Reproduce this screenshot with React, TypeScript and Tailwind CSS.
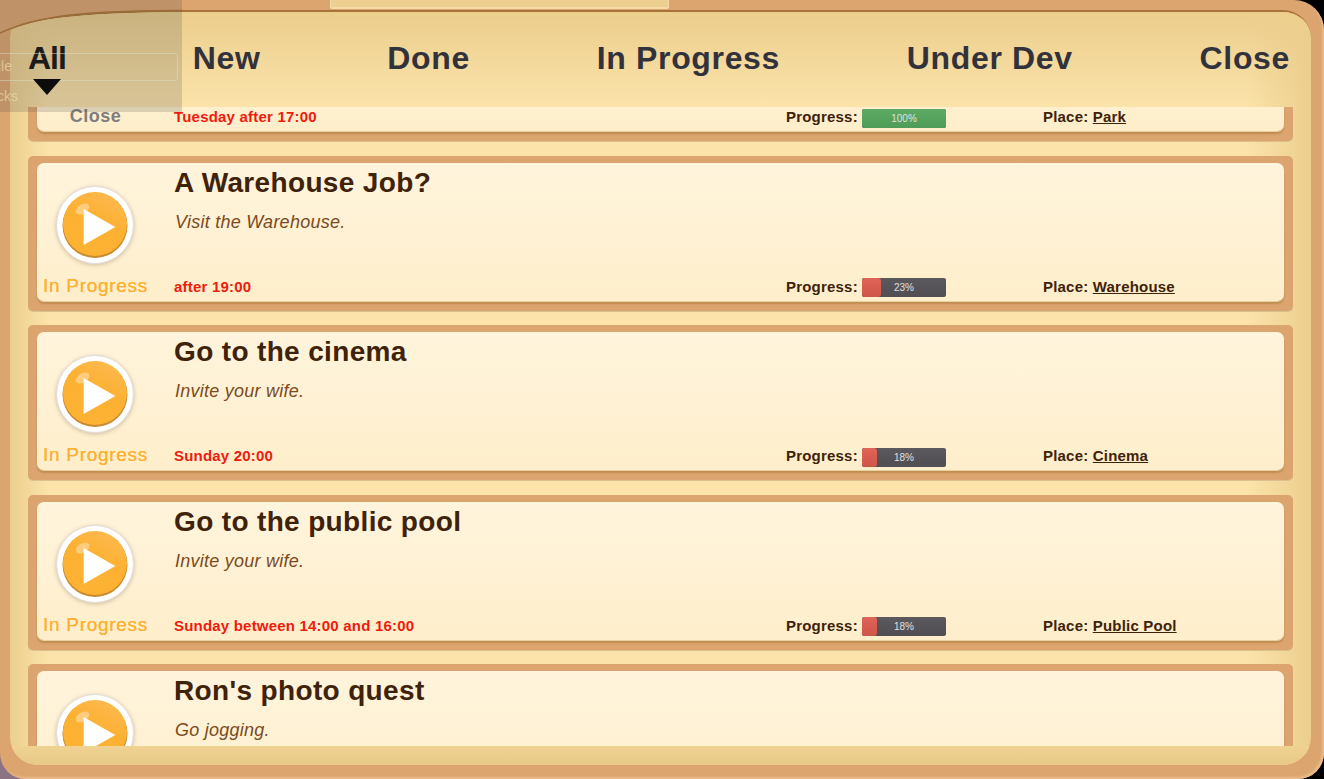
import React from "react";

const font = "font-['Liberation_Sans',Arial,sans-serif]";

interface Quest {
  id: number;
  title?: string;
  desc?: string;
  status?: string;
  time?: string;
  progress?: number;
  place?: string;
}

const quests: Quest[] = [
  { id: 1, status: "Close", time: "Tuesday after 17:00", progress: 100, place: "Park" },
  { id: 2, title: "A Warehouse Job?", desc: "Visit the Warehouse.", status: "In Progress", time: "after 19:00", progress: 23, place: "Warehouse" },
  { id: 3, title: "Go to the cinema", desc: "Invite your wife.", status: "In Progress", time: "Sunday 20:00", progress: 18, place: "Cinema" },
  { id: 4, title: "Go to the public pool", desc: "Invite your wife.", status: "In Progress", time: "Sunday between 14:00 and 16:00", progress: 18, place: "Public Pool" },
  { id: 5, title: "Ron's photo quest", desc: "Go jogging." },
];

const PlayIcon = () => (
  <svg className="mr-[2px] drop-shadow-[0_1px_2px_rgba(120,90,60,0.35)]" width="80" height="80" viewBox="0 0 80 80">
    <defs>
      <linearGradient id="orb" x1="0.8" y1="0" x2="0.3" y2="1">
        <stop offset="0" stopColor="#fdba52" />
        <stop offset="0.45" stopColor="#fdb133" />
        <stop offset="1" stopColor="#feb232" />
      </linearGradient>
    </defs>
    <circle cx="40" cy="40" r="38.5" fill="#fff" stroke="#e2dedd" strokeWidth="1" />
    <circle cx="40" cy="40.5" r="32.5" fill="#c98a2e" />
    <circle cx="40" cy="39" r="32" fill="url(#orb)" />
    <ellipse cx="27.5" cy="24" rx="7.5" ry="4.5" fill="#fff" opacity="0.35" transform="rotate(-30 27.5 24)" />
    <path d="M28.6 24 L60.3 42 L28.6 60 Z" fill="#fff" />
  </svg>
);

const Card = ({ quest }: { quest: Quest }) => {
  const done = quest.progress === 100;
  return (
    <div className="h-[155px] shrink-0 rounded-[5px] bg-[#dca56f] pt-[7px] pr-[9px] pb-[10px] pl-[9px] shadow-[0_1px_0_#d9c08c]">
      <div className="relative flex h-[138px] rounded-[7px] bg-gradient-to-b from-[#fff4dc] to-[#feeecb] shadow-[0_1px_0_#e8d0a0,0_3px_2px_#c08c50]">
        <div className="mr-[20px] flex w-[117px] shrink-0 flex-col items-center pt-[22px]">
          <PlayIcon />
          {quest.status && (
            <div className={`mt-[10px] leading-[22px] whitespace-nowrap ${done ? "text-[18px] font-bold tracking-[0.45px] text-[#7f7d80]" : "text-[19px] tracking-[0.7px] text-[#fdb133] [text-shadow:0_0_0.5px_#fdb133]"}`}>
              {quest.status}
            </div>
          )}
        </div>
        <div className="flex flex-1 flex-col">
          {quest.title && (
            <>
              <div className="mt-[4px] text-[28px] leading-[32px] font-bold tracking-[0.35px] text-[#3f220a]">{quest.title}</div>
              <div className="mt-[12px] ml-[1px] text-[18px] leading-[22px] tracking-[0.25px] text-[#7b4a1d] italic">{quest.desc}</div>
            </>
          )}
          {quest.time && (
            <div className="mt-auto mb-[4px] flex items-center text-[15px] leading-[20px] font-bold tracking-[0.2px]">
              <div className="w-[612px] text-[#ee1c0e]">{quest.time}</div>
              <div className="flex w-[257px] items-center text-[#3f220a]">
                <span className="w-[76px]">Progress:</span>
                <div className="relative h-[19px] w-[84px] translate-y-px overflow-hidden rounded-[2px] bg-gradient-to-b from-[#5b585e] to-[#514e53]">
                  <div
                    className={`h-full rounded-[3px] bg-gradient-to-b ${done ? "from-[#5cab64] to-[#4f9b58]" : "from-[#e06457] to-[#cf5549]"}`}
                    style={{ width: `${quest.progress}%` }}
                  />
                  <div className="absolute inset-0 text-center text-[10px] leading-[19px] font-normal tracking-normal text-[#e0e0e0]">
                    {quest.progress}%
                  </div>
                </div>
              </div>
              <div className="text-[#3f220a]">
                Place: <span className="underline">{quest.place}</span>
              </div>
            </div>
          )}
        </div>
      </div>
    </div>
  );
};

const tabs = ["All", "New", "Done", "In Progress", "Under Dev", "Close"];

export default function App() {
  return (
    <div className={`relative h-[779px] w-[1324px] overflow-hidden bg-[linear-gradient(90deg,#8d7284_50%,#000_50%)] ${font}`}>
      <div className="h-full w-full rounded-tr-[30px] rounded-b-[26px] bg-[#dca56f] pt-[10px] pr-[13px] pb-[14px] pl-[10px] shadow-[inset_-2px_-2px_2px_#e8bb8a]">
        <div className="flex h-full flex-col overflow-hidden rounded-tl-[172px_22px] rounded-tr-[28px] rounded-b-[28px] border-t-2 border-[#a87339] bg-[linear-gradient(90deg,#eccf8e_0%,#fbe3aa_3%,#fbe3aa_95%,#eccf8e_100%)]">
          <div className="flex h-[95px] shrink-0 items-start justify-between bg-gradient-to-b from-[#ecce8d] to-transparent pt-[27px] pr-[21px] pl-[18px] text-[32px] leading-[38px] font-bold tracking-[0.65px] text-[#32323c]">
            {tabs.map((tab) => (
              <span key={tab} className={tab === "All" ? "tracking-[-1px] text-[#111]" : ""}>
                {tab}
              </span>
            ))}
          </div>
          <div className="flex min-h-0 flex-1 flex-col overflow-hidden pr-[18px] pl-[18px]">
            <div className="-mt-[121px] flex flex-col gap-[14.5px]">
              {quests.map((q) => (
                <Card key={q.id} quest={q} />
              ))}
            </div>
          </div>
          <div className="h-[19px] shrink-0 bg-gradient-to-b from-[#efd392] to-[#e8c987]" />
        </div>
      </div>

      <div className="absolute top-0 left-[330px] h-[9px] w-[339px] rounded-b-[2px] border-x border-b-2 border-[#f4dca8] bg-[#edcf8f]" />

      <div className="absolute top-0 left-0 h-[112px] w-[182px] bg-[#4a4a4a]/20">
        <svg className="absolute top-0 left-0" width="182" height="36" viewBox="0 0 182 36">
          <path d="M0 33 C20 24 45 18 70 15 C105 11 140 10.5 182 10.5" stroke="#9c6c38" strokeWidth="1.5" fill="none" />
          <path d="M10.5 30 V36" stroke="#c7a26a" strokeWidth="1" fill="none" />
        </svg>
        <div className="absolute top-[53px] -left-[10px] h-[28px] w-[188px] rounded-[3px] border border-[#d8e2c8]/50" />
        <div className="absolute top-[58px] right-[170px] text-[14px] leading-[16px] text-[#eadcb0]/70">Article</div>
        <div className="absolute top-[88px] right-[164px] text-[14px] leading-[16px] text-[#eadcb0]/70">Tracks</div>
        <div className="absolute top-[79px] left-[33px] h-0 w-0 border-x-[14px] border-t-[16px] border-x-transparent border-t-[#0c0c0c]" />
      </div>
    </div>
  );
}
